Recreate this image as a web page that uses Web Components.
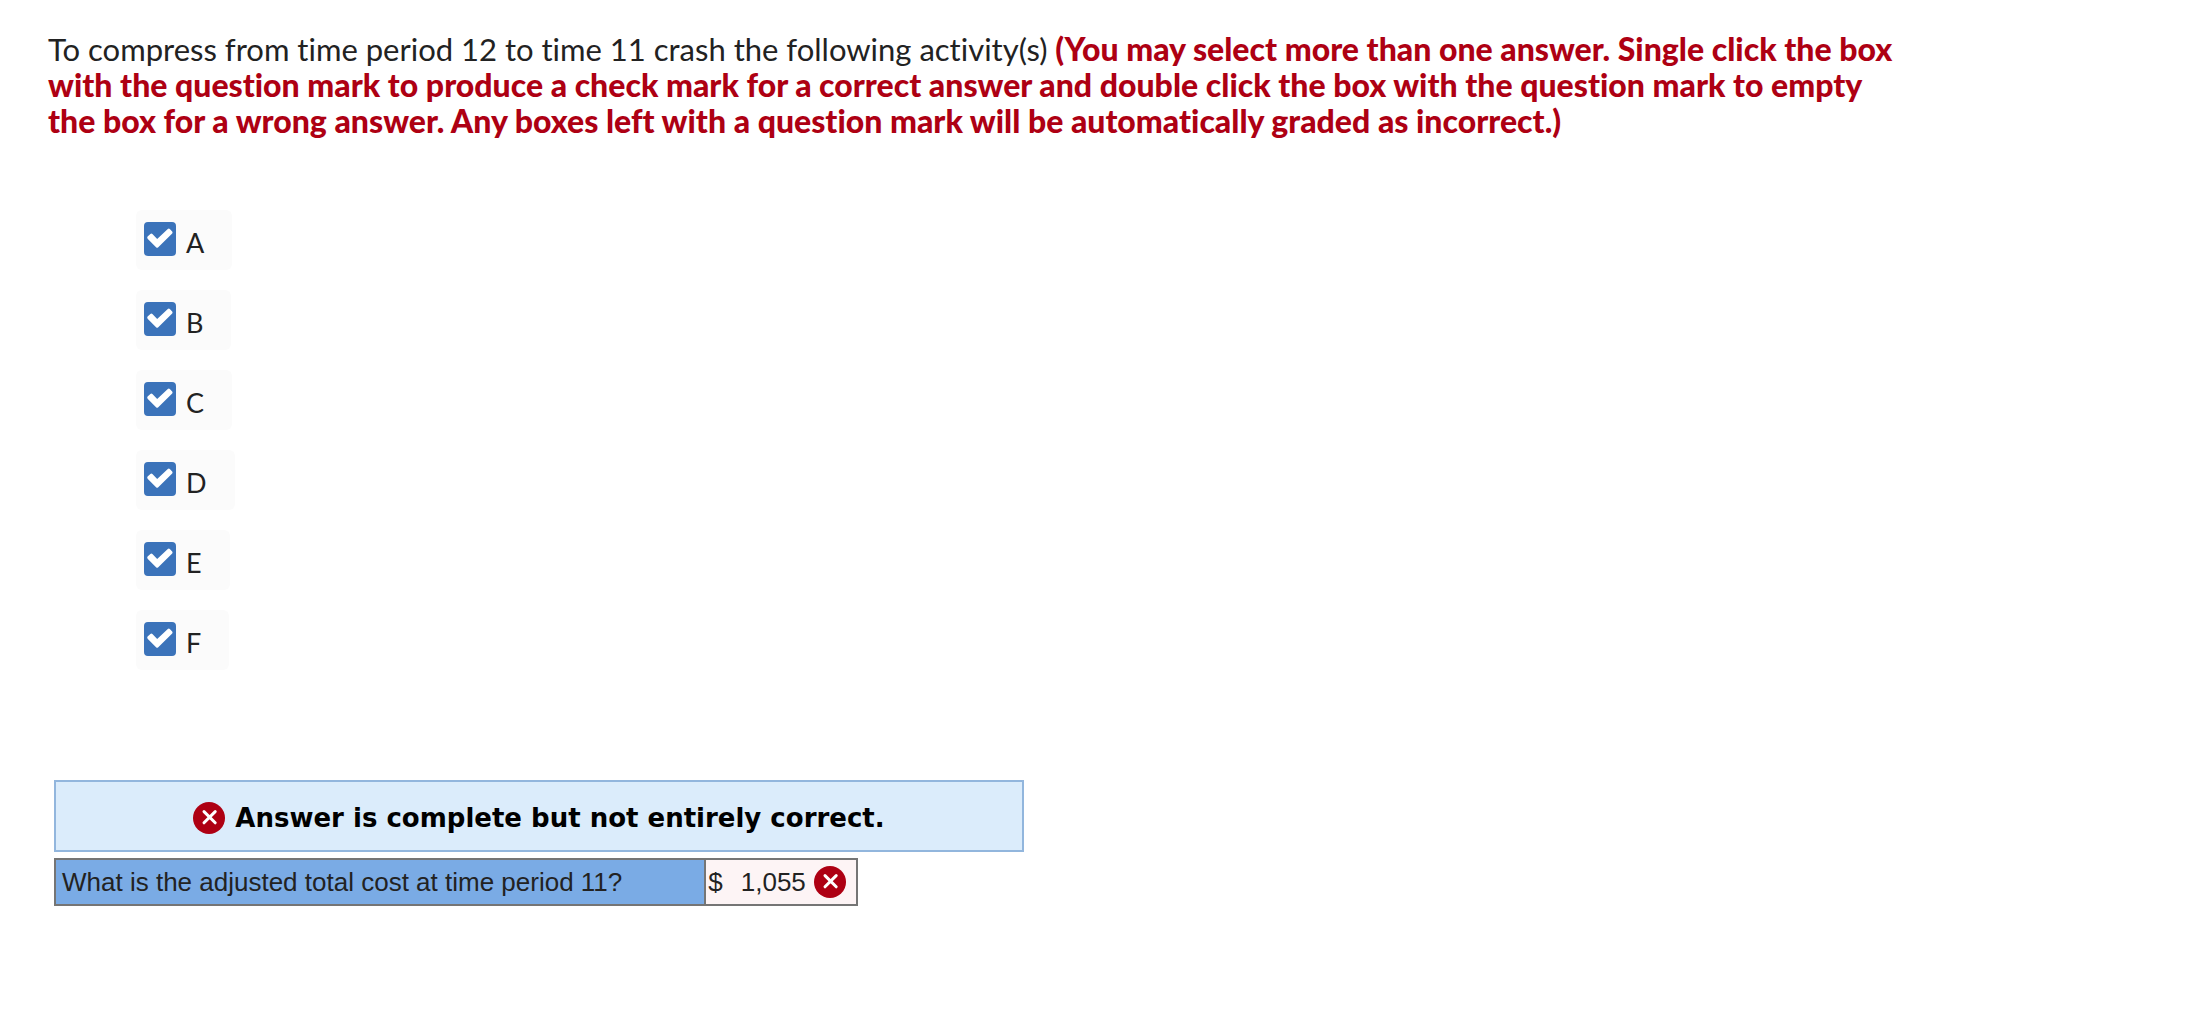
<!DOCTYPE html>
<html lang="en">
<head>
<meta charset="utf-8">
<meta name="viewport" content="width=device-width, initial-scale=1">
<title>Crash activities</title>
<style>
  body {
    margin: 0;
    background: #fff;
    color: #222;
    font-family: Lato, "Open Sans", sans-serif;
    font-variant-ligatures: none;
  }
</style>
</head>
<body>
<question-page>
  <question-prompt>
    To compress from time period 12 to time 11 crash the following activity(s)
    <strong slot="hint">(You may select more than one answer. Single click the box<br>
    with the question mark to produce a check mark for a correct answer and double click the box with the question mark to empty<br>
    the box for a wrong answer. Any boxes left with a question mark will be automatically graded as incorrect.)</strong>
  </question-prompt>
  <activity-list slot="choices">
    <activity-option checked>A</activity-option>
    <activity-option checked>B</activity-option>
    <activity-option checked>C</activity-option>
    <activity-option checked>D</activity-option>
    <activity-option checked>E</activity-option>
    <activity-option checked>F</activity-option>
  </activity-list>
  <answer-banner slot="result">Answer is complete but not entirely correct.</answer-banner>
  <answer-table slot="result" currency="$" value="1,055">What is the adjusted total cost at time period 11?</answer-table>
</question-page>

<script>
class QuestionPage extends HTMLElement {
  constructor() {
    super();
    this.attachShadow({ mode: 'open' });
    this.shadowRoot.innerHTML = `
      <style>
        :host {
          display: block;
          padding: 31px 48px;
        }
        .choices {
          padding: 71px 0 0 88px;
        }
        .result {
          display: flex;
          flex-direction: column;
          gap: 6px;
          max-width: 970px;
          padding: 110px 0 0 6px;
        }
      </style>
      <main>
        <slot></slot>
        <div class="choices"><slot name="choices"></slot></div>
        <div class="result"><slot name="result"></slot></div>
      </main>
    `;
  }
}

class QuestionPrompt extends HTMLElement {
  constructor() {
    super();
    this.attachShadow({ mode: 'open' });
    this.shadowRoot.innerHTML = `
      <style>
        :host {
          display: block;
          font-size: 31px;
          line-height: 36px;
        }
        p {
          margin: 0;
        }
        ::slotted(strong) {
          color: #ae0013;
          font-size: 32px;
          font-weight: 900;
        }
      </style>
      <p><slot></slot> <slot name="hint"></slot></p>
    `;
  }
}

class ActivityList extends HTMLElement {
  constructor() {
    super();
    this.attachShadow({ mode: 'open' });
    this.shadowRoot.innerHTML = `
      <style>
        :host {
          display: block;
        }
        fieldset {
          display: flex;
          flex-direction: column;
          align-items: flex-start;
          gap: 20px;
          margin: 0;
          padding: 0;
          border: 0;
        }
      </style>
      <fieldset aria-label="Activities"><slot></slot></fieldset>
    `;
  }
}

class ActivityOption extends HTMLElement {
  constructor() {
    super();
    this.attachShadow({ mode: 'open' });
    this.shadowRoot.innerHTML = `
      <style>
        :host {
          display: block;
        }
        label {
          display: flex;
          align-items: flex-start;
          gap: 10px;
          padding: 12px 28px 10px 8px;
          border-radius: 6px;
          background: #fbfbfb;
          font-size: 27px;
          line-height: 34px;
          cursor: pointer;
        }
        .box {
          display: grid;
        }
        .box > * {
          grid-area: 1 / 1;
        }
        input {
          appearance: none;
          width: 32px;
          height: 34px;
          margin: 0;
          border: 2px solid #3b73ba;
          border-radius: 4px;
          background: #fff;
        }
        input:checked {
          background: #3b73ba;
        }
        svg {
          visibility: hidden;
          pointer-events: none;
        }
        input:checked + svg {
          visibility: visible;
        }
        .text {
          padding-top: 4px;
        }
      </style>
      <label>
        <span class="box">
          <input type="checkbox">
          <svg width="32" height="34" viewBox="0 0 32 34" aria-hidden="true">
            <path d="M3.6 14.6 L6.4 12 Q7.4 11.2 8.4 12 L13.2 17 L23.8 6.9 Q24.8 6 25.8 6.9 L28.2 9.4 Q29 10.4 28.2 11.4 L14 25.4 Q13.2 26.2 12.3 25.4 L3.6 16.7 Q2.8 15.6 3.6 14.6 Z" fill="#fff"/>
          </svg>
        </span>
        <span class="text"><slot></slot></span>
      </label>
    `;
  }

  connectedCallback() {
    this.shadowRoot.querySelector('input').checked = this.hasAttribute('checked');
  }
}

// Red round mark for a wrong answer
class WrongMark extends HTMLElement {
  constructor() {
    super();
    this.attachShadow({ mode: 'open' });
    this.shadowRoot.innerHTML = `
      <style>
        :host {
          display: block;
          flex: none;
        }
        svg {
          display: block;
        }
      </style>
      <svg width="32" height="32" viewBox="0 0 32 32" role="img" aria-label="Incorrect">
        <circle cx="16" cy="16" r="16" fill="#ae0013"/>
        <path d="M11 9.6 L22.2 20.8 M22.2 9.6 L11 20.8" fill="none" stroke="#fff" stroke-width="3" stroke-linecap="round"/>
      </svg>
    `;
  }
}

class AnswerBanner extends HTMLElement {
  constructor() {
    super();
    this.attachShadow({ mode: 'open' });
    this.shadowRoot.innerHTML = `
      <style>
        :host {
          display: flex;
          align-items: center;
          justify-content: center;
          gap: 10px;
          padding: 20px 16px 16px;
          border: 2px solid #92b6dd;
          background: #dbecfb;
          color: #000;
          font: 700 26px/32px Verdana, "DejaVu Sans", sans-serif;
        }
      </style>
      <wrong-mark></wrong-mark>
      <span><slot></slot></span>
    `;
  }
}

class AnswerTable extends HTMLElement {
  constructor() {
    super();
    this.attachShadow({ mode: 'open' });
    this.shadowRoot.innerHTML = `
      <style>
        :host {
          display: block;
          font: 26px/32px Arial, "Liberation Sans", sans-serif;
        }
        table {
          border-collapse: collapse;
        }
        th, td {
          border: 2px solid #757575;
          text-align: left;
          font-weight: 400;
        }
        th {
          padding: 6px 82px 6px 6px;
          background: #7aabe5;
        }
        td {
          padding: 6px 10px 6px 2px;
          background: #fdf4f5;
        }
        .value {
          display: flex;
          align-items: center;
          gap: 8px;
        }
        .currency {
          padding-right: 10px;
        }
      </style>
      <table>
        <tr>
          <th scope="row"><slot></slot></th>
          <td>
            <div class="value">
              <span class="currency"></span>
              <span class="amount"></span>
              <wrong-mark></wrong-mark>
            </div>
          </td>
        </tr>
      </table>
    `;
  }

  connectedCallback() {
    this.shadowRoot.querySelector('.currency').textContent = this.getAttribute('currency');
    this.shadowRoot.querySelector('.amount').textContent = this.getAttribute('value');
  }
}

customElements.define('question-page', QuestionPage);
customElements.define('question-prompt', QuestionPrompt);
customElements.define('activity-list', ActivityList);
customElements.define('activity-option', ActivityOption);
customElements.define('wrong-mark', WrongMark);
customElements.define('answer-banner', AnswerBanner);
customElements.define('answer-table', AnswerTable);
</script>
</body>
</html>
